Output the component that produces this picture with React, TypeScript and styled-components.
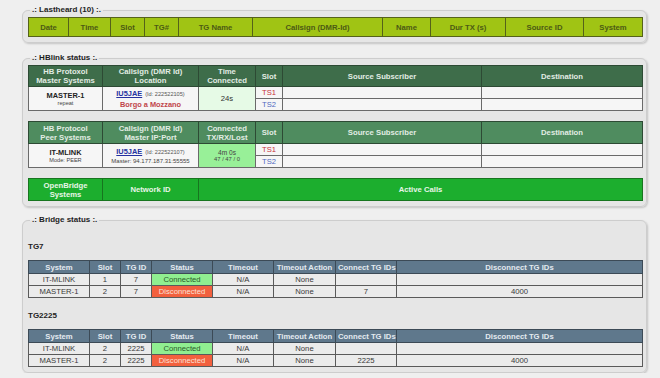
import React from "react";
import styled, { createGlobalStyle } from "styled-components";

const Global = createGlobalStyle`
  html, body {
    margin: 0;
    padding: 0;
    background: #efefef;
    font-family: "Liberation Sans", Arial, sans-serif;
  }
`;

const Page = styled.div`
  padding: 5px 13px 0 22px;
  display: flex;
  flex-direction: column;
`;

const Panel = styled.fieldset<{ $mt?: number; $pb?: number }>`
  margin: ${(p) => p.$mt ?? 0}px 0 0 0;
  min-width: 0;
  border: 1px solid #cdcdcd;
  border-radius: 6px;
  background: #e6e6e6;
  padding: 2px 4px ${(p) => p.$pb ?? 5}px 5px;
  box-shadow: 1px 1px 2px rgba(0, 0, 0, 0.18);
  display: flex;
  flex-direction: column;
  gap: 10px;
`;

const Legend = styled.legend`
  font-weight: bold;
  font-size: 8px;
  line-height: 10px;
  padding: 0 2px;
  margin-left: 2px;
  color: #1e1e1e;
`;

const Table = styled.table<{ $border: string }>`
  width: 100%;
  table-layout: fixed;
  border-collapse: collapse;
  border: 1px solid ${(p) => p.$border};
  font-size: 7.7px;
`;

const Th = styled.th<{ $bg: string; $fg: string; $line: string; $h: number }>`
  background: ${(p) => p.$bg};
  color: ${(p) => p.$fg};
  border: 1px solid ${(p) => p.$line};
  height: ${(p) => p.$h}px;
  padding: 0 2px;
  font-weight: bold;
  line-height: 9px;
  text-align: center;
  vertical-align: middle;
  white-space: nowrap;
  overflow: hidden;
`;

const Td = styled.td<{ $bg?: string; $fg?: string; $h?: number }>`
  background: ${(p) => p.$bg ?? "#f6f6f6"};
  color: ${(p) => p.$fg ?? "#333"};
  border: 1px solid #6a6a6a;
  height: ${(p) => p.$h ?? 11}px;
  padding: 0 2px;
  line-height: 11px;
  text-align: center;
  vertical-align: middle;
  white-space: nowrap;
  overflow: hidden;
`;

const BTd = styled.td<{ $bg?: string; $fg?: string }>`
  background: ${(p) => p.$bg ?? "#ebebeb"};
  color: ${(p) => p.$fg ?? "#3a3a3a"};
  border: 1px solid #5a5a5a;
  height: 11px;
  padding: 0 2px;
  line-height: 11px;
  text-align: center;
  white-space: nowrap;
  overflow: hidden;
`;

const Strong = styled.div<{ $fg?: string; $size?: number }>`
  font-weight: bold;
  font-size: ${(p) => p.$size ?? 7.4}px;
  line-height: 9px;
  color: ${(p) => p.$fg ?? "#222"};
`;

const Small = styled.div<{ $size?: number }>`
  font-size: ${(p) => p.$size ?? 5.6}px;
  line-height: 7px;
  color: #444;
`;

const Call = styled.span`
  font-weight: bold;
  font-size: 7.4px;
  color: #2430a0;
  text-decoration: underline;
`;

const IdNote = styled.span`
  font-size: 5.6px;
  color: #555;
  margin-left: 3px;
`;

const Slot = styled.span<{ $ts: 1 | 2 }>`
  color: ${(p) => (p.$ts === 1 ? "#c8303a" : "#5068c0")};
  font-size: 7.6px;
`;

const GroupTitle = styled.div<{ $first: boolean }>`
  font-weight: bold;
  font-size: 8px;
  line-height: 10px;
  color: #222;
  padding-top: ${(p) => (p.$first ? 15 : 3)}px;
`;

const BridgeBlock = styled.div`
  display: flex;
  flex-direction: column;
  gap: 8px;
`;

const Cols = ({ widths }: { widths: number[] }) => (
  <colgroup>
    {widths.map((w, i) => (
      <col key={i} style={{ width: w }} />
    ))}
  </colgroup>
);

const lhCols = [40, 42, 34, 34, 74, 130, 48, 75, 78, 59];
const lhHead = ["Date", "Time", "Slot", "TG#", "TG Name", "Callsign (DMR-Id)", "Name", "Dur TX (s)", "Source ID", "System"];

const hbCols = [74, 96, 57, 27, 199, 161];
const brCols = [61, 31, 31, 61, 61, 62, 61, 246];
const brHead = ["System", "Slot", "TG ID", "Status", "Timeout", "Timeout Action", "Connect TG IDs", "Disconnect TG IDs"];

type BridgeRow = { sys: string; slot: string; tg: string; on: boolean; conn: string; disc: string };

const bridges: { title: string; rows: BridgeRow[] }[] = [
  {
    title: "TG7",
    rows: [
      { sys: "IT-MLINK", slot: "1", tg: "7", on: true, conn: "", disc: "" },
      { sys: "MASTER-1", slot: "2", tg: "7", on: false, conn: "7", disc: "4000" },
    ],
  },
  {
    title: "TG2225",
    rows: [
      { sys: "IT-MLINK", slot: "2", tg: "2225", on: true, conn: "", disc: "" },
      { sys: "MASTER-1", slot: "2", tg: "2225", on: false, conn: "2225", disc: "4000" },
    ],
  },
];

type HbProps = {
  head: [string, string][];
  bg: string;
  name: string;
  sub: string;
  id: string;
  line2: React.ReactNode;
  time: React.ReactNode;
  timeBg: string;
  headH: number;
};

const HbTable = ({ head, bg, name, sub, id, line2, time, timeBg, headH }: HbProps) => (
  <Table $border="#4a4a4a">
    <Cols widths={hbCols} />
    <thead>
      <tr>
        {head.map(([a, b], i) => (
          <Th key={i} $bg={bg} $fg="#e2ece4" $line="#2d4a34" $h={headH}>
            {a}
            {b && <br />}
            {b}
          </Th>
        ))}
      </tr>
    </thead>
    <tbody>
      <tr>
        <Td rowSpan={2}>
          <Strong>{name}</Strong>
          <Small>{sub}</Small>
        </Td>
        <Td rowSpan={2}>
          <div>
            <Call>IU5JAE</Call>
            <IdNote>(Id: {id})</IdNote>
          </div>
          {line2}
        </Td>
        <Td rowSpan={2} $bg={timeBg} $fg="#333">
          {time}
        </Td>
        <Td>
          <Slot $ts={1}>TS1</Slot>
        </Td>
        <Td />
        <Td />
      </tr>
      <tr>
        <Td>
          <Slot $ts={2}>TS2</Slot>
        </Td>
        <Td />
        <Td />
      </tr>
    </tbody>
  </Table>
);

export default function App() {
  return (
    <>
      <Global />
      <Page>
        <Panel $pb={5}>
          <Legend>.: Lastheard (10) :.</Legend>
          <Table $border="#4f5a16">
            <Cols widths={lhCols} />
            <thead>
              <tr>
                {lhHead.map((h) => (
                  <Th key={h} $bg="#a0c414" $fg="#4c5a14" $line="#55621a" $h={18}>
                    {h}
                  </Th>
                ))}
              </tr>
            </thead>
          </Table>
        </Panel>

        <Panel $mt={10} $pb={5}>
          <Legend>.: HBlink status :.</Legend>
          <HbTable
            head={[
              ["HB Protoxol", "Master Systems"],
              ["Callsign (DMR Id)", "Location"],
              ["Time", "Connected"],
              ["Slot", ""],
              ["Source Subscriber", ""],
              ["Destination", ""],
            ]}
            bg="#3e6d4a"
            name="MASTER-1"
            sub="repeat"
            id="222522105"
            line2={<Strong $fg="#c0454a">Borgo a Mozzano</Strong>}
            time={<span>24s</span>}
            timeBg="#e6fae6"
            headH={20}
          />
          <HbTable
            head={[
              ["HB Protocol", "Peer Systems"],
              ["Callsign (DMR Id)", "Master IP:Port"],
              ["Connected", "TX/RX/Lost"],
              ["Slot", ""],
              ["Source Subscriber", ""],
              ["Destination", ""],
            ]}
            bg="#4f8c5f"
            name="IT-MLINK"
            sub="Mode: PEER"
            id="222522107"
            line2={<Small $size={6}>Master: 94.177.187.31:55555</Small>}
            time={
              <>
                <Small $size={6.6}>4m 0s</Small>
                <Small $size={5.8}>47 / 47 / 0</Small>
              </>
            }
            timeBg="#98f098"
            headH={21}
          />
          <Table $border="#17751f">
            <Cols widths={[74, 96, 444]} />
            <thead>
              <tr>
                <Th $bg="#1cae2e" $fg="#e8f6e8" $line="#17751f" $h={21}>
                  OpenBridge
                  <br />
                  Systems
                </Th>
                <Th $bg="#1cae2e" $fg="#e8f6e8" $line="#17751f" $h={21}>
                  Network ID
                </Th>
                <Th $bg="#1cae2e" $fg="#e8f6e8" $line="#17751f" $h={21}>
                  Active Calls
                </Th>
              </tr>
            </thead>
          </Table>
        </Panel>

        <Panel $mt={8}>
          <Legend>.: Bridge status :.</Legend>
          {bridges.map((b, i) => (
            <BridgeBlock key={b.title}>
              <GroupTitle $first={i === 0}>{b.title}</GroupTitle>
              <Table $border="#3c4a56">
                <Cols widths={brCols} />
                <thead>
                  <tr>
                    {brHead.map((h) => (
                      <Th key={h} $bg="#5f788c" $fg="#e4eaf0" $line="#3c4a56" $h={12}>
                        {h}
                      </Th>
                    ))}
                  </tr>
                </thead>
                <tbody>
                  {b.rows.map((r) => (
                    <tr key={r.sys}>
                      <BTd>{r.sys}</BTd>
                      <BTd>{r.slot}</BTd>
                      <BTd>{r.tg}</BTd>
                      {r.on ? (
                        <BTd $bg="#90ee90" $fg="#2a5a2a">Connected</BTd>
                      ) : (
                        <BTd $bg="#f2603e" $fg="#fbe0d8">Disconnected</BTd>
                      )}
                      <BTd>N/A</BTd>
                      <BTd>None</BTd>
                      <BTd>{r.conn}</BTd>
                      <BTd>{r.disc}</BTd>
                    </tr>
                  ))}
                </tbody>
              </Table>
            </BridgeBlock>
          ))}
        </Panel>
      </Page>
    </>
  );
}
